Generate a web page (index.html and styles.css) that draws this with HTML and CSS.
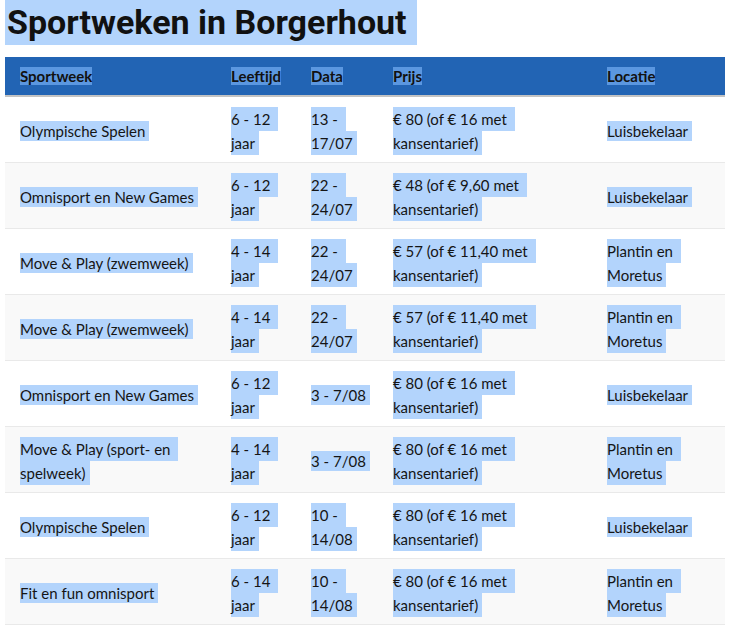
FILE: index.html
```html
<!DOCTYPE html>
<html lang="nl">
<head>
<meta charset="utf-8">
<title>Sportweken in Borgerhout</title>
<link rel="stylesheet" href="styles.css">
</head>
<body>
<h1><span class="title-hl">Sportweken in Borgerhout</span></h1>
<table class="weeks">
  <colgroup>
    <col class="c-week"><col class="c-age"><col class="c-date"><col class="c-price"><col class="c-loc">
  </colgroup>
  <thead>
    <tr>
      <th><span class="hh">Sportweek</span></th>
      <th><span class="hh">Leeftijd</span></th>
      <th><span class="hh">Data</span></th>
      <th><span class="hh">Prijs</span></th>
      <th><span class="hh">Locatie</span></th>
    </tr>
  </thead>
  <tbody>
    <tr>
      <td><span class="hl">Olympische Spelen</span></td>
      <td class="multi"><span class="hl first">6 - 12&nbsp;</span><br><span class="hl">jaar</span></td>
      <td class="multi"><span class="hl first">13 -&nbsp;</span><br><span class="hl">17/07</span></td>
      <td class="multi"><span class="hl first">€ 80 (of € 16 met&nbsp;</span><br><span class="hl">kansentarief)</span></td>
      <td><span class="hl">Luisbekelaar</span></td>
    </tr>
    <tr>
      <td><span class="hl">Omnisport en New Games</span></td>
      <td class="multi"><span class="hl first">6 - 12&nbsp;</span><br><span class="hl">jaar</span></td>
      <td class="multi"><span class="hl first">22 -&nbsp;</span><br><span class="hl">24/07</span></td>
      <td class="multi"><span class="hl first">€ 48 (of € 9,60 met&nbsp;</span><br><span class="hl">kansentarief)</span></td>
      <td><span class="hl">Luisbekelaar</span></td>
    </tr>
    <tr>
      <td><span class="hl">Move &amp; Play (zwemweek)</span></td>
      <td class="multi"><span class="hl first">4 - 14&nbsp;</span><br><span class="hl">jaar</span></td>
      <td class="multi"><span class="hl first">22 -&nbsp;</span><br><span class="hl">24/07</span></td>
      <td class="multi"><span class="hl first">€ 57 (of € 11,40 met&nbsp;</span><br><span class="hl">kansentarief)</span></td>
      <td class="multi"><span class="hl first">Plantin en&nbsp;</span><br><span class="hl">Moretus</span></td>
    </tr>
    <tr>
      <td><span class="hl">Move &amp; Play (zwemweek)</span></td>
      <td class="multi"><span class="hl first">4 - 14&nbsp;</span><br><span class="hl">jaar</span></td>
      <td class="multi"><span class="hl first">22 -&nbsp;</span><br><span class="hl">24/07</span></td>
      <td class="multi"><span class="hl first">€ 57 (of € 11,40 met&nbsp;</span><br><span class="hl">kansentarief)</span></td>
      <td class="multi"><span class="hl first">Plantin en&nbsp;</span><br><span class="hl">Moretus</span></td>
    </tr>
    <tr>
      <td><span class="hl">Omnisport en New Games</span></td>
      <td class="multi"><span class="hl first">6 - 12&nbsp;</span><br><span class="hl">jaar</span></td>
      <td><span class="hl">3 - 7/08</span></td>
      <td class="multi"><span class="hl first">€ 80 (of € 16 met&nbsp;</span><br><span class="hl">kansentarief)</span></td>
      <td><span class="hl">Luisbekelaar</span></td>
    </tr>
    <tr>
      <td class="multi"><span class="hl first">Move &amp; Play (sport- en&nbsp;</span><br><span class="hl">spelweek)</span></td>
      <td class="multi"><span class="hl first">4 - 14&nbsp;</span><br><span class="hl">jaar</span></td>
      <td><span class="hl">3 - 7/08</span></td>
      <td class="multi"><span class="hl first">€ 80 (of € 16 met&nbsp;</span><br><span class="hl">kansentarief)</span></td>
      <td class="multi"><span class="hl first">Plantin en&nbsp;</span><br><span class="hl">Moretus</span></td>
    </tr>
    <tr>
      <td><span class="hl">Olympische Spelen</span></td>
      <td class="multi"><span class="hl first">6 - 12&nbsp;</span><br><span class="hl">jaar</span></td>
      <td class="multi"><span class="hl first">10 -&nbsp;</span><br><span class="hl">14/08</span></td>
      <td class="multi"><span class="hl first">€ 80 (of € 16 met&nbsp;</span><br><span class="hl">kansentarief)</span></td>
      <td><span class="hl">Luisbekelaar</span></td>
    </tr>
    <tr>
      <td><span class="hl">Fit en fun omnisport</span></td>
      <td class="multi"><span class="hl first">6 - 14&nbsp;</span><br><span class="hl">jaar</span></td>
      <td class="multi"><span class="hl first">10 -&nbsp;</span><br><span class="hl">14/08</span></td>
      <td class="multi"><span class="hl first">€ 80 (of € 16 met&nbsp;</span><br><span class="hl">kansentarief)</span></td>
      <td class="multi"><span class="hl first">Plantin en&nbsp;</span><br><span class="hl">Moretus</span></td>
    </tr>
  </tbody>
</table>
</body>
</html>
```
FILE: styles.css
```css
html, body {
  background: #ffffff;
}
body {
  margin: 0;
  padding: 0 5px;
  font-family: Lato, "Noto Sans", sans-serif;
  color: #151515;
}
h1 {
  margin: 0 0 12px;
  font-family: Roboto, "Noto Sans", sans-serif;
  font-weight: 700;
  font-size: 34px;
  line-height: 45px;
  color: #111;
}
.title-hl {
  display: inline-block;
  background: #b3d4fc;
  padding: 0 10px 0 2px;
}
.weeks {
  width: 720px;
  border-collapse: collapse;
  table-layout: fixed;
}
.c-week { width: 211px; }
.c-age { width: 80px; }
.c-date { width: 82px; }
.c-price { width: 214px; }
.c-loc { width: 133px; }
.weeks th {
  background: #2264b4;
  text-align: left;
  font-weight: 700;
  font-size: 15px;
  line-height: 22px;
  padding: 8px 15px;
  border-bottom: 2px solid #c3c3c3;
  color: #111;
}
.hh {
  background: #5b97e0;
}
.weeks td {
  font-size: 15px;
  line-height: 24px;
  padding: 10px 15px 7px;
  vertical-align: middle;
  white-space: nowrap;
  border-bottom: 1px solid #e9e9e9;
}
.weeks tbody tr:nth-child(even) td {
  background: #f9f9f9;
}
.hl {
  background: #b3d4fc;
  padding: 1px 4px 1px 0;
}
.multi .hl {
  padding: 3px 4px 3px 0;
}
```
